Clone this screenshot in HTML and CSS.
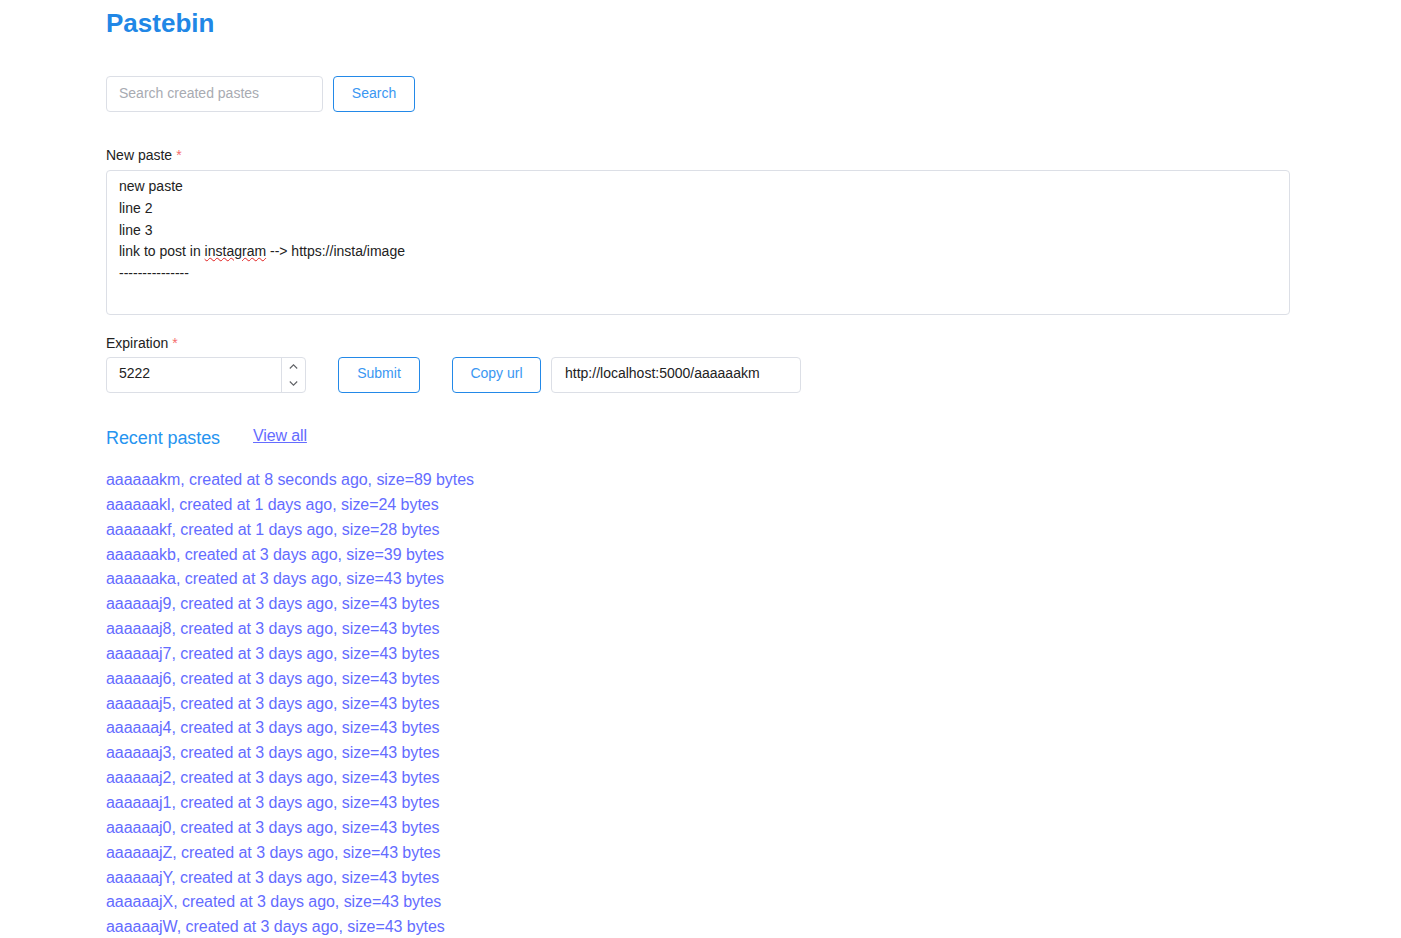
FILE: index.html
```html
<!DOCTYPE html>
<html lang="en">
<head>
<meta charset="utf-8">
<title>Pastebin</title>
<link rel="stylesheet" href="styles.css">
</head>
<body>
<div class="page">
  <h1 class="brand">Pastebin</h1>

  <div class="search-row">
    <input class="field search-input" type="text" placeholder="Search created pastes">
    <button class="btn btn-search" type="button">Search</button>
  </div>

  <div class="form-label label-paste">New paste<span class="req">*</span></div>
  <div class="textarea" role="textbox" aria-multiline="true">
    <div class="tline">new paste</div>
    <div class="tline">line 2</div>
    <div class="tline">line 3</div>
    <div class="tline">link to post in <span class="misspelled">instagram</span> --&gt; https://insta/image</div>
    <div class="tline">---------------</div>
  </div>

  <div class="form-label label-exp">Expiration<span class="req">*</span></div>
  <div class="action-row">
    <div class="number-input">
      <div class="number-value">5222</div>
      <div class="number-controls">
        <span class="spin">
          <svg width="9" height="5" viewBox="0 0 9 5"><path d="M0.8 4.5 L4.5 0.8 L8.2 4.5" fill="none" stroke="#606266" stroke-width="1.1"/></svg>
        </span>
        <span class="spin">
          <svg width="9" height="5" viewBox="0 0 9 5"><path d="M0.8 0.5 L4.5 4.2 L8.2 0.5" fill="none" stroke="#606266" stroke-width="1.1"/></svg>
        </span>
      </div>
    </div>
    <button class="btn btn-submit" type="button">Submit</button>
    <button class="btn btn-copy" type="button">Copy url</button>
    <div class="field url-field">http://localhost:5000/aaaaaakm</div>
  </div>

  <div class="recent-head">
    <h2 class="recent-title">Recent pastes</h2>
    <a class="view-all" href="#">View all</a>
  </div>

  <div class="paste-list">
    <div class="paste"><a href="#">aaaaaakm, created at 8 seconds ago, size=89 bytes</a></div>
    <div class="paste"><a href="#">aaaaaakl, created at 1 days ago, size=24 bytes</a></div>
    <div class="paste"><a href="#">aaaaaakf, created at 1 days ago, size=28 bytes</a></div>
    <div class="paste"><a href="#">aaaaaakb, created at 3 days ago, size=39 bytes</a></div>
    <div class="paste"><a href="#">aaaaaaka, created at 3 days ago, size=43 bytes</a></div>
    <div class="paste"><a href="#">aaaaaaj9, created at 3 days ago, size=43 bytes</a></div>
    <div class="paste"><a href="#">aaaaaaj8, created at 3 days ago, size=43 bytes</a></div>
    <div class="paste"><a href="#">aaaaaaj7, created at 3 days ago, size=43 bytes</a></div>
    <div class="paste"><a href="#">aaaaaaj6, created at 3 days ago, size=43 bytes</a></div>
    <div class="paste"><a href="#">aaaaaaj5, created at 3 days ago, size=43 bytes</a></div>
    <div class="paste"><a href="#">aaaaaaj4, created at 3 days ago, size=43 bytes</a></div>
    <div class="paste"><a href="#">aaaaaaj3, created at 3 days ago, size=43 bytes</a></div>
    <div class="paste"><a href="#">aaaaaaj2, created at 3 days ago, size=43 bytes</a></div>
    <div class="paste"><a href="#">aaaaaaj1, created at 3 days ago, size=43 bytes</a></div>
    <div class="paste"><a href="#">aaaaaaj0, created at 3 days ago, size=43 bytes</a></div>
    <div class="paste"><a href="#">aaaaaajZ, created at 3 days ago, size=43 bytes</a></div>
    <div class="paste"><a href="#">aaaaaajY, created at 3 days ago, size=43 bytes</a></div>
    <div class="paste"><a href="#">aaaaaajX, created at 3 days ago, size=43 bytes</a></div>
    <div class="paste"><a href="#">aaaaaajW, created at 3 days ago, size=43 bytes</a></div>
  </div>
</div>
</body>
</html>
```
FILE: styles.css
```css
html, body {
  margin: 0;
  padding: 0;
  background: #ffffff;
}

body {
  font-family: "Liberation Sans", Arial, sans-serif;
  color: #222222;
  font-size: 14px;
}

.page {
  margin-left: 106px;
  width: 1184px;
}

.brand {
  margin: 0 0 37px 0;
  padding-top: 7px;
  font-size: 26px;
  line-height: 32px;
  font-weight: bold;
  color: #2187e6;
}

.search-row {
  display: flex;
  gap: 10px;
  height: 36px;
}

.field {
  box-sizing: border-box;
  height: 36px;
  border: 1px solid #dcdfe6;
  border-radius: 4px;
  background: #fff;
  font-family: inherit;
  font-size: 14px;
  color: #222;
  padding: 0 12px 2px 12px;
  outline: none;
}

.search-input {
  width: 217px;
}

.search-input::placeholder {
  color: #a8abb2;
}

.btn {
  box-sizing: border-box;
  height: 36px;
  border: 1px solid #2389e8;
  border-radius: 4px;
  background: #fff;
  color: #3a97f2;
  font-family: inherit;
  font-size: 14px;
  padding: 0 0 3px 0;
  cursor: pointer;
}

.btn-search { width: 82px; }
.btn-submit { width: 82px; margin-left: 22px; padding-bottom: 4px; }
.btn-copy { width: 89px; margin-left: 22px; padding-bottom: 4px; }

.form-label {
  font-size: 14px;
  line-height: 22px;
  color: #222;
}

.label-paste { margin-top: 32px; margin-bottom: 4px; }
.label-exp { margin-top: 17px; margin-bottom: 3px; }

.req {
  color: #f56c6c;
  margin-left: 4px;
}

.textarea {
  box-sizing: border-box;
  height: 145px;
  border: 1px solid #dcdfe6;
  border-radius: 4px;
  padding: 5px 12px 4px 12px;
  font-size: 14px;
  line-height: 21.75px;
  color: #222;
}

.misspelled {
  text-decoration: underline wavy #e02020;
  text-decoration-thickness: 1px;
  text-underline-offset: 1px;
}

.action-row {
  display: flex;
  gap: 10px;
  height: 36px;
}

.number-input {
  box-sizing: border-box;
  width: 200px;
  height: 36px;
  border: 1px solid #dcdfe6;
  border-radius: 4px;
  display: flex;
}

.number-value {
  flex: 1;
  padding-left: 12px;
  line-height: 31px;
  font-size: 14px;
  color: #222;
}

.number-controls {
  width: 23px;
  border-left: 1px solid #dcdfe6;
  display: flex;
  flex-direction: column;
}

.spin {
  flex: 1;
  display: flex;
  align-items: center;
  justify-content: center;
}

.url-field {
  width: 250px;
  line-height: 31px;
  padding-left: 13px;
}

.recent-head {
  display: flex;
  align-items: flex-start;
  gap: 33px;
  margin-top: 31px;
}

.recent-title {
  margin: 0;
  font-size: 18px;
  line-height: 28px;
  font-weight: normal;
  color: #2694f0;
  letter-spacing: -0.08px;
}

.view-all {
  font-size: 16px;
  line-height: 24.8px;
  color: #646cff;
  text-decoration: underline;
  letter-spacing: -0.12px;
}

.paste-list {
  margin-top: 16px;
}

.paste {
  font-size: 16px;
  line-height: 24.85px;
  letter-spacing: -0.05px;
}

.paste a {
  color: #646cff;
  text-decoration: none;
}
```
